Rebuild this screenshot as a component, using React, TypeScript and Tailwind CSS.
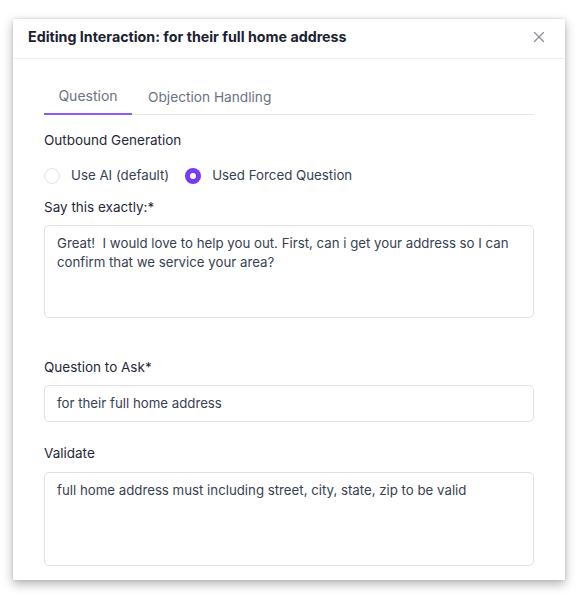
import { X } from "lucide-react";

const font = { fontFamily: "Inter, 'Noto Sans', sans-serif" };

function Radio({ checked, label }: { checked: boolean; label: string }) {
  return (
    <label className="flex h-5 items-center gap-[11px] text-[13.3px] text-[#374151]">
      {checked ? (
        <span className="flex h-4 w-4 items-center justify-center rounded-full bg-[#7c3aed]">
          <span className="h-[6px] w-[6px] rounded-full bg-white" />
        </span>
      ) : (
        <span className="h-4 w-4 rounded-full border border-[#e2e4e8] bg-white" />
      )}
      {label}
    </label>
  );
}

export default function App() {
  return (
    <div className="min-h-[596px] bg-white pt-[19px] pl-[13px]" style={font}>
      <div className="w-[552px] h-[561px] bg-white shadow-[0_4px_10px_rgba(0,0,0,0.3),0_0_3px_rgba(0,0,0,0.12)]">
        <div className="flex h-[40px] items-center justify-between border-b border-[#f0f0f2] pb-[4px] pl-[15px] pr-[17px]">
          <h2 className="text-[14.25px] font-bold text-[#1a2130]">
            Editing Interaction: for their full home address
          </h2>
          <X className="h-[18px] w-[18px] text-[#8b8f97]" strokeWidth={1.75} />
        </div>

        <div className="px-[31px] pt-[27px]">
          <div className="flex border-b border-[#e5e7eb] text-[14px] leading-5 text-[#6b7280]">
            <button className="-mb-px w-[88px] border-b-2 border-[#8b5cf6] pb-[7px]">Question</button>
            <button className="ml-[4px] px-[12px] pb-[7px] text-[13.7px]">Objection Handling</button>
          </div>

          <div className="mt-[15px] text-[13.5px] leading-5 text-[#1f2937]">Outbound Generation</div>
          <div className="mt-[16px] flex items-center gap-[16px]">
            <Radio checked={false} label="Use AI (default)" />
            <Radio checked label="Used Forced Question" />
          </div>

          <div className="mt-[11px] text-[13.5px] leading-5 text-[#1f2937]">Say this exactly:*</div>
          <div className="mt-[8px] h-[93px] rounded-[5px] border border-[#dfe1e6] px-[12px] py-[8px] text-[13.25px] leading-[19px] text-[#374151]">
            Great!&nbsp; I would love to help you out. First, can i get your address so I can confirm that we service your area?
          </div>

          <div className="mt-[39px] text-[13.5px] leading-5 text-[#1f2937]">Question to Ask*</div>
          <div className="mt-[8px] flex h-[37px] items-center rounded-[5px] border border-[#dfe1e6] px-[12px] text-[13.25px] text-[#374151]">
            for their full home address
          </div>

          <div className="mt-[21px] text-[13.5px] leading-5 text-[#1f2937]">Validate</div>
          <div className="mt-[9px] h-[94px] rounded-[5px] border border-[#dfe1e6] px-[12px] py-[8px] text-[13.25px] leading-[19px] text-[#374151]">
            full home address must including street, city, state, zip to be valid
          </div>
        </div>
      </div>
    </div>
  );
}
